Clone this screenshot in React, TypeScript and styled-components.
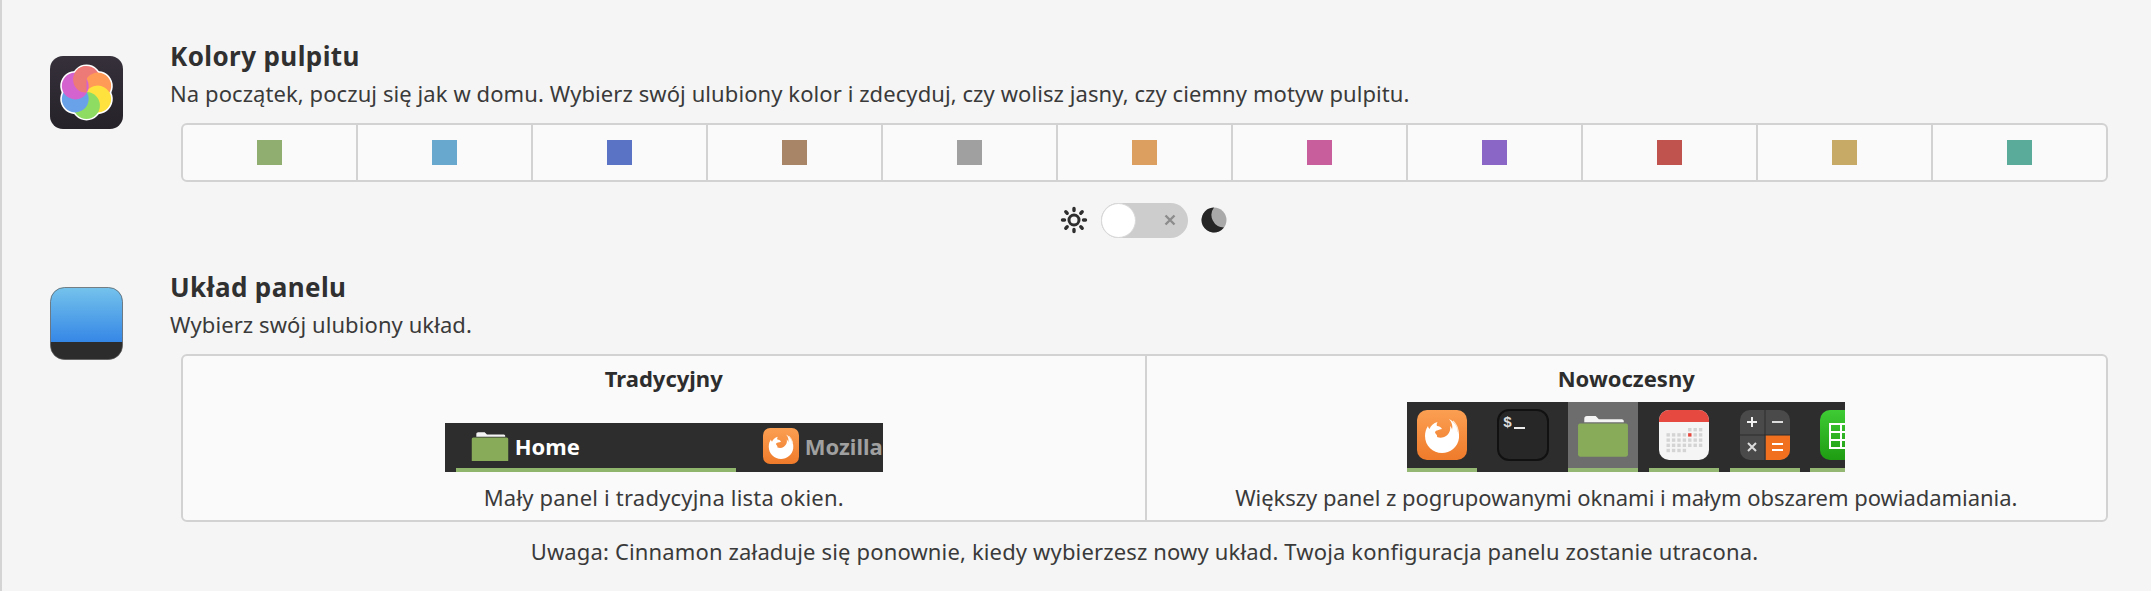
import React from 'react';
import styled, { createGlobalStyle } from 'styled-components';

const GlobalStyle = createGlobalStyle`
  html, body {
    margin: 0;
    background: #f5f5f5;
  }
  body {
    font-family: "Noto Sans", "Open Sans", sans-serif;
    color: #333;
  }
`;

const Page = styled.div`
  position: relative;
  box-sizing: border-box;
  width: 2151px;
  height: 591px;
  overflow: hidden;
  padding: 41px 43px 0 48px;
  border-left: 2px solid #d4d4d4;
  background: #f5f5f5;
`;

const ActiveMark = styled.div`
  position: absolute;
  left: -2px;
  top: 56px;
  width: 2px;
  height: 56px;
  background: #a3bd88;
`;

const Section = styled.section<{ $gap: number }>`
  display: flex;
  gap: 47px;
  margin-bottom: ${(p) => p.$gap}px;
`;

const IconSlot = styled.div`
  flex: 0 0 73px;
  height: 73px;
  margin-top: 15px;
`;

const Content = styled.div`
  flex: 1;
  min-width: 0;
`;

const Title = styled.h2`
  margin: 0;
  font-size: 26px;
  line-height: 30px;
  font-weight: 700;
  color: #303030;
  letter-spacing: 0.4px;
`;

const Subtitle = styled.p`
  margin: 9px 0 0;
  font-size: 22px;
  line-height: 27px;
  color: #3a3a3a;
  letter-spacing: 0.08px;
`;

const ColorTable = styled.div`
  display: flex;
  box-sizing: border-box;
  height: 59px;
  margin: 16px 0 0 11px;
  background: #fafafa;
  border: 2px solid #d2d2d2;
  border-radius: 6px;
  overflow: hidden;
`;

const ColorCell = styled.div`
  flex: 1;
  display: flex;
  align-items: center;
  justify-content: center;
  border-right: 2px solid #d2d2d2;
  &:last-child {
    border-right: none;
  }
`;

const Swatch = styled.div<{ $color: string }>`
  width: 25px;
  height: 25px;
  background: ${(p) => p.$color};
`;

const ThemeRow = styled.div`
  display: flex;
  align-items: center;
  justify-content: center;
  gap: 13px;
  height: 36px;
  margin-top: 20px;
  margin-left: 9px;
`;

const Toggle = styled.div`
  position: relative;
  box-sizing: border-box;
  width: 87px;
  height: 35px;
  border-radius: 18px;
  background: #cdcdcd;
`;

const Knob = styled.div`
  position: absolute;
  left: 0;
  top: 0;
  box-sizing: border-box;
  width: 35px;
  height: 35px;
  border-radius: 50%;
  background: #fff;
  border: 1px solid #d8d8d8;
`;

const ToggleCross = styled.svg`
  position: absolute;
  right: 12px;
  top: 11px;
`;

const LayoutTable = styled.div`
  display: grid;
  grid-template-columns: 1fr 1fr;
  box-sizing: border-box;
  height: 168px;
  margin: 16px 0 0 11px;
  background: #fafafa;
  border: 2px solid #d2d2d2;
  border-radius: 6px;
`;

const LayoutOption = styled.div`
  display: flex;
  flex-direction: column;
  align-items: center;
  & + & {
    border-left: 2px solid #d2d2d2;
  }
`;

const OptionName = styled.div`
  margin-top: 9px;
  height: 27px;
  font-size: 22px;
  line-height: 27px;
  font-weight: 700;
  color: #2d2d2d;
`;

const OptionText = styled.div<{ $spacing: number }>`
  margin-top: 12px;
  font-size: 22px;
  line-height: 27px;
  color: #3a3a3a;
  letter-spacing: ${(p) => p.$spacing}px;
  white-space: nowrap;
`;

const Panel = styled.div<{ $tall?: boolean }>`
  display: flex;
  box-sizing: border-box;
  width: 438px;
  height: ${(p) => (p.$tall ? 70 : 49)}px;
  margin-top: ${(p) => (p.$tall ? 10 : 31)}px;
  padding-left: ${(p) => (p.$tall ? 0 : 11)}px;
  background: #2d2d2d;
  overflow: hidden;
`;

const WindowTab = styled.div<{ $width: number; $pad: number; $active?: boolean }>`
  display: flex;
  flex: 0 0 ${(p) => p.$width}px;
  align-items: center;
  gap: 6px;
  box-sizing: border-box;
  height: 49px;
  padding: 0 0 ${(p) => (p.$active ? 0 : 4)}px ${(p) => p.$pad}px;
  font-size: 22px;
  font-weight: 700;
  color: ${(p) => (p.$active ? '#fff' : '#a0a0a0')};
  border-bottom: ${(p) => (p.$active ? '4px solid #8fb56d' : '0')};
  white-space: nowrap;
`;

const DockItem = styled.div<{ $hover?: boolean; $running?: boolean }>`
  display: flex;
  flex: 0 0 70px;
  align-items: center;
  justify-content: center;
  box-sizing: border-box;
  height: 70px;
  margin-right: 10.6px;
  background: ${(p) => (p.$hover ? '#6d6d6d' : 'transparent')};
  border-bottom: ${(p) => (p.$running ? '4px solid #94b874' : '4px solid transparent')};
`;

const Notice = styled.p`
  margin: 0 0 0 11px;
  padding-top: 16px;
  text-align: center;
  font-size: 22px;
  line-height: 27px;
  color: #3a3a3a;
  letter-spacing: 0.15px;
`;

const SWATCHES = [
  '#8fae6f', '#69a8ce', '#5b73c4', '#a98568', '#a0a0a0', '#dc9f60',
  '#c85f9c', '#8a67c7', '#c1534f', '#c8aa67', '#5aab99',
];

// petals run clockwise from the top, each one lies over the one before it
const PETALS = ['#ee7a78', '#ff9a57', '#ffe23d', '#8edc62', '#6aa2ea', '#d563cf'];

const ColorsIcon = () => (
  <svg width="73" height="73" viewBox="0 0 73 73">
    <defs>
      <linearGradient id="dark" x1="0" y1="0" x2="0" y2="1">
        <stop offset="0" stopColor="#35303a" />
        <stop offset="1" stopColor="#262229" />
      </linearGradient>
      <clipPath id="leftHalf">
        <rect x="0" y="0" width="36.5" height="36.5" />
      </clipPath>
    </defs>
    <rect width="73" height="73" rx="13" fill="url(#dark)" />
    {PETALS.map((_, i) => (
      <circle key={i} cx="36.5" cy="23.5" r="15" fill="#fff" transform={`rotate(${i * 60} 36.5 36.5)`} />
    ))}
    {PETALS.map((color, i) => (
      <circle key={color} cx="36.5" cy="23.5" r="13.4" fill={color} transform={`rotate(${i * 60} 36.5 36.5)`} />
    ))}
    <circle cx="36.5" cy="23.5" r="13.4" fill={PETALS[0]} clipPath="url(#leftHalf)" />
  </svg>
);

const PanelIcon = () => (
  <svg width="73" height="73" viewBox="0 0 73 73">
    <defs>
      <linearGradient id="sky" x1="0" y1="0" x2="0" y2="1">
        <stop offset="0" stopColor="#75c3ec" />
        <stop offset="1" stopColor="#3587e6" />
      </linearGradient>
      <clipPath id="panelClip">
        <rect x="0.5" y="0.5" width="72" height="72" rx="14" />
      </clipPath>
    </defs>
    <g clipPath="url(#panelClip)">
      <rect width="73" height="55" fill="url(#sky)" />
      <rect y="55" width="73" height="18" fill="#2c2c2c" />
    </g>
    <rect x="0.5" y="0.5" width="72" height="72" rx="14" fill="none" stroke="#555" strokeOpacity="0.7" />
  </svg>
);

const SunIcon = () => (
  <svg width="28" height="28" viewBox="0 0 28 28" fill="none" stroke="#2e2e2e">
    <circle cx="14" cy="14" r="5" strokeWidth="3" />
    <g strokeWidth="3.4" strokeLinecap="round">
      <path d="M14 2.5v2M14 23.5v2M2.5 14h2M23.5 14h2M5.8 5.8l1.4 1.4M20.8 20.8l1.4 1.4M5.8 22.2l1.4-1.4M20.8 7.2l1.4-1.4" />
    </g>
  </svg>
);

const MoonIcon = () => (
  <svg width="26" height="26" viewBox="0 0 26 26">
    <circle cx="13" cy="13" r="12.5" fill="#a9a9a9" />
    <path d="M13 .5A12.5 12.5 0 1 0 23 20.5 12.5 12.5 0 0 1 13 .5Z" fill="#252525" />
  </svg>
);

const FolderIcon = ({ size }: { size: number }) => (
  <svg width={size} height={size * 0.84} viewBox="0 0 50 42">
    <path d="M7 9V5.5C7 4 8 3 9.500 3h8.500l3 3h22c1.500 0 2 1 2 2v1Z" fill="#f4f4f4" />
    <rect x="1" y="10" width="48" height="32" rx="2" fill="#87ab58" />
  </svg>
);

const FirefoxIcon = ({ size, id }: { size: number; id: string }) => (
  <svg width={size} height={size} viewBox="0 0 50 50">
    <defs>
      <linearGradient id={id} x1="0" y1="0" x2="0" y2="1">
        <stop offset="0" stopColor="#fb9f52" />
        <stop offset="1" stopColor="#ef7b2b" />
      </linearGradient>
    </defs>
    <rect width="50" height="50" rx="10" fill={`url(#${id})`} />
    <path d="M32 9c6 3 11 10 10 19-1 9-9 15-17 15-9 0-17-7-17-17 0-4 1-7 3-10 0 1 .5 2 1.500 3 1-3 4-6 8-7-1 2-1 3-.5 4 2 0 4 1 5 3-3 1-6 1-7 3 0 2 3 3 2 5 3 1 6 1 9-1 3-2 5-6 4-10 1 1 2 2 2 4 1-4 0-8-3-11Z" fill="#fff" />
    <path d="M36 11c3 3 5 7 5 11" fill="none" stroke="#fde3cd" strokeWidth="1.200" />
  </svg>
);

const TerminalIcon = () => (
  <svg width="52" height="52" viewBox="0 0 52 52">
    <rect x="1" y="1" width="50" height="50" rx="11" fill="#272727" stroke="#111" strokeWidth="2" />
    <text x="6" y="18" fontFamily="Liberation Mono, monospace" fontSize="15" fontWeight="700" fill="#dcdcdc">$</text>
    <rect x="17" y="18" width="11" height="2" fill="#ececec" />
  </svg>
);

const CalendarIcon = () => {
  const dots: React.ReactNode[] = [];
  for (let row = 0; row < 5; row++) {
    for (let col = 0; col < 7; col++) {
      if ((row === 0 && col < 4) || (row === 4 && col > 3)) continue;
      const red = row === 1 && col === 4;
      dots.push(
        <rect key={`${row}-${col}`} x={7.500 + col * 5.400} y={18 + row * 5.200} width="3.400" height="3.400" fill={red ? '#e5473d' : '#d4d4d4'} />,
      );
    }
  }
  return (
    <svg width="50" height="50" viewBox="0 0 50 50">
      <rect width="50" height="50" rx="10" fill="#f5f5f5" />
      <path d="M0 12V10A10 10 0 0 1 10 0H40A10 10 0 0 1 50 10V12Z" fill="#e5493f" />
      {dots}
    </svg>
  );
};

const CalculatorIcon = () => (
  <svg width="50" height="50" viewBox="0 0 50 50">
    <rect width="50" height="50" rx="10" fill="#4a4a4a" />
    <path d="M25.500 25H50V40A10 10 0 0 1 40 50H25.500Z" fill="#f0701f" />
    <path d="M24.500 0h1v50h-1ZM0 24.500h50v1H0Z" fill="#2c2c2c" />
    <path d="M12 7v10M7 12h10" stroke="#f2f2f2" strokeWidth="2" />
    <path d="M32 12h11" stroke="#dcdcdc" strokeWidth="2" />
    <path d="M8 33l8 8M16 33l-8 8" stroke="#dcdcdc" strokeWidth="2" />
    <path d="M32 34h11M32 40h11" stroke="#fff" strokeWidth="2" />
  </svg>
);

const SheetIcon = () => (
  <svg width="50" height="50" viewBox="0 0 50 50">
    <defs>
      <linearGradient id="sheet" x1="0" y1="0" x2="0" y2="1">
        <stop offset="0" stopColor="#3ecb34" />
        <stop offset="1" stopColor="#1f9c12" />
      </linearGradient>
    </defs>
    <rect width="50" height="50" rx="10" fill="url(#sheet)" />
    <path d="M10 14h34v24H10ZM10 22h34M10 30h34M21 14v24M32 14v24" fill="none" stroke="#fff" strokeWidth="2" />
  </svg>
);

export default function App() {
  return (
    <>
      <GlobalStyle />
      <Page>
        <ActiveMark />
        <Section $gap={34}>
          <IconSlot>
            <ColorsIcon />
          </IconSlot>
          <Content>
            <Title>Kolory pulpitu</Title>
            <Subtitle>
              Na początek, poczuj się jak w domu. Wybierz swój ulubiony kolor i zdecyduj, czy wolisz jasny, czy ciemny motyw pulpitu.
            </Subtitle>
            <ColorTable>
              {SWATCHES.map((c) => (
                <ColorCell key={c}>
                  <Swatch $color={c} />
                </ColorCell>
              ))}
            </ColorTable>
            <ThemeRow>
              <SunIcon />
              <Toggle>
                <Knob />
                <ToggleCross width="12" height="12" viewBox="0 0 12 12">
                  <path d="M1.500 1.500l9 9M10.500 1.500l-9 9" stroke="#8c8c8c" strokeWidth="2.400" />
                </ToggleCross>
              </Toggle>
              <MoonIcon />
            </ThemeRow>
          </Content>
        </Section>
        <Section $gap={0}>
          <IconSlot>
            <PanelIcon />
          </IconSlot>
          <Content>
            <Title>Układ panelu</Title>
            <Subtitle>Wybierz swój ulubiony układ.</Subtitle>
            <LayoutTable>
              <LayoutOption>
                <OptionName>Tradycyjny</OptionName>
                <Panel>
                  <WindowTab $width={280} $pad={15} $active>
                    <FolderIcon size={38} />
                    Home
                  </WindowTab>
                  <WindowTab $width={147} $pad={27}>
                    <FirefoxIcon size={36} id="fxSmall" />
                    Mozilla Firefox
                  </WindowTab>
                </Panel>
                <OptionText $spacing={0.2}>Mały panel i tradycyjna lista okien.</OptionText>
              </LayoutOption>
              <LayoutOption>
                <OptionName>Nowoczesny</OptionName>
                <Panel $tall>
                  <DockItem $running>
                    <FirefoxIcon size={50} id="fxBig" />
                  </DockItem>
                  <DockItem>
                    <TerminalIcon />
                  </DockItem>
                  <DockItem $hover $running>
                    <FolderIcon size={52} />
                  </DockItem>
                  <DockItem $running>
                    <CalendarIcon />
                  </DockItem>
                  <DockItem $running>
                    <CalculatorIcon />
                  </DockItem>
                  <DockItem $running>
                    <SheetIcon />
                  </DockItem>
                </Panel>
                <OptionText $spacing={-0.04}>Większy panel z pogrupowanymi oknami i małym obszarem powiadamiania.</OptionText>
              </LayoutOption>
            </LayoutTable>
            <Notice>Uwaga: Cinnamon załaduje się ponownie, kiedy wybierzesz nowy układ. Twoja konfiguracja panelu zostanie utracona.</Notice>
          </Content>
        </Section>
      </Page>
    </>
  );
}
